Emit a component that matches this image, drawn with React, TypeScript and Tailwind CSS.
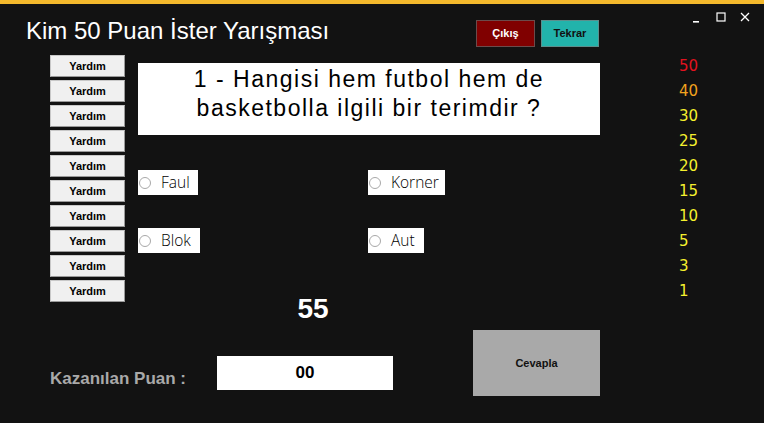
import React from "react";

const scores: { v: string; c: string }[] = [
  { v: "50", c: "text-[#e3121f]" },
  { v: "40", c: "text-[#f2a21e]" },
  { v: "30", c: "text-[#f5f02e]" },
  { v: "25", c: "text-[#f5f02e]" },
  { v: "20", c: "text-[#f5f02e]" },
  { v: "15", c: "text-[#f5f02e]" },
  { v: "10", c: "text-[#f5f02e]" },
  { v: "5", c: "text-[#f5f02e]" },
  { v: "3", c: "text-[#f5f02e]" },
  { v: "1", c: "text-[#f5f02e]" },
];

function Option({ label, w }: { label: string; w: string }) {
  return (
    <div className={`flex h-[25px] items-center bg-white ${w}`}>
      <span className="ml-[1px] h-[12px] w-[12px] rounded-full border border-[#a8a8a8] bg-white" />
      <span className="ml-[10px] font-['Open_Sans',sans-serif] text-[15.5px] font-light leading-none text-black">
        {label}
      </span>
    </div>
  );
}

export default function App() {
  return (
    <div className="flex h-[423px] w-[764px] flex-col overflow-hidden bg-[#121212] font-['Liberation_Sans',Arial,sans-serif]">
      <div className="h-[4px] w-full bg-[#f4b92c]" />
      {/* header */}
      <div className="flex h-[51px] items-start">
        <div className="ml-[26px] mt-[13px] w-[450px] text-[24px] leading-[28px] text-white">
          Kim 50 Puan İster Yarışması
        </div>
        <button className="mt-[16px] flex h-[27px] w-[59px] items-center justify-center border border-[#6b4b4b] bg-[#800000] text-[11px] font-bold text-white">
          Çıkış
        </button>
        <button className="ml-[6px] mt-[16px] flex h-[27px] w-[58px] items-center justify-center border border-[#5c8e8c] bg-[#22b3ab] text-[11px] font-bold text-[#111]">
          Tekrar
        </button>
        <div className="ml-[93px] mt-[7px] flex items-center gap-[14px]">
          <svg width="10" height="12" viewBox="0 0 10 12">
            <rect x="1" y="10" width="6" height="1.6" fill="white" />
          </svg>
          <svg width="10" height="12" viewBox="0 0 10 12">
            <rect x="1" y="2" width="8" height="8" fill="none" stroke="white" strokeWidth="1.2" />
          </svg>
          <svg width="10" height="12" viewBox="0 0 10 12">
            <path d="M1 2 L9 10 M9 2 L1 10" stroke="white" strokeWidth="1.3" />
          </svg>
        </div>
      </div>
      {/* body */}
      <div className="flex h-[275px]">
        <div className="ml-[50px] flex w-[75px] flex-col gap-[3px]">
          {Array.from({ length: 10 }).map((_, i) => (
            <button
              key={i}
              className="flex h-[22px] w-[75px] items-center justify-center border border-[#c8c8c8] border-b-[#9a9a9a] border-r-[#9a9a9a] bg-[#f0f0f0] text-[11px] font-bold text-black"
            >
              Yardım
            </button>
          ))}
        </div>
        <div className="ml-[13px] flex w-[462px] flex-col">
          <div className="mt-[8px] h-[72px] bg-white pt-[2px] text-center text-[23px] leading-[29px] tracking-[1.5px] text-black">
            1 - Hangisi hem futbol hem de
            <br />
            basketbolla ilgili bir terimdir ?
          </div>
          <div className="mt-[35px] grid grid-cols-[230px_1fr] gap-y-[33px]">
            <Option label="Faul" w="w-[60px]" />
            <Option label="Korner" w="w-[77px]" />
            <Option label="Blok" w="w-[62px]" />
            <Option label="Aut" w="w-[56px]" />
          </div>
          <div className="mt-[40px] w-[350px] text-center text-[28px] font-bold leading-[32px] text-white">
            55
          </div>
        </div>
        <div className="-mt-[1px] ml-[79px] flex flex-col font-['DejaVu_Sans',sans-serif] text-[15px] leading-[25px]">
          {scores.map((s) => (
            <div key={s.v} className={s.c}>
              {s.v}
            </div>
          ))}
        </div>
      </div>
      {/* bottom */}
      <div className="flex items-start">
        <div className="ml-[50px] mt-[39px] w-[167px] text-[17px] font-bold leading-[20px] text-[#a9a9a9]">
          Kazanılan Puan :
        </div>
        <div className="mt-[26px] flex h-[34px] w-[176px] items-center justify-center bg-white text-[17px] font-bold text-black">
          00
        </div>
        <button className="ml-[80px] flex h-[66px] w-[127px] items-center justify-center bg-[#a9a9a9] text-[11px] font-bold text-[#111]">
          Cevapla
        </button>
      </div>
    </div>
  );
}
